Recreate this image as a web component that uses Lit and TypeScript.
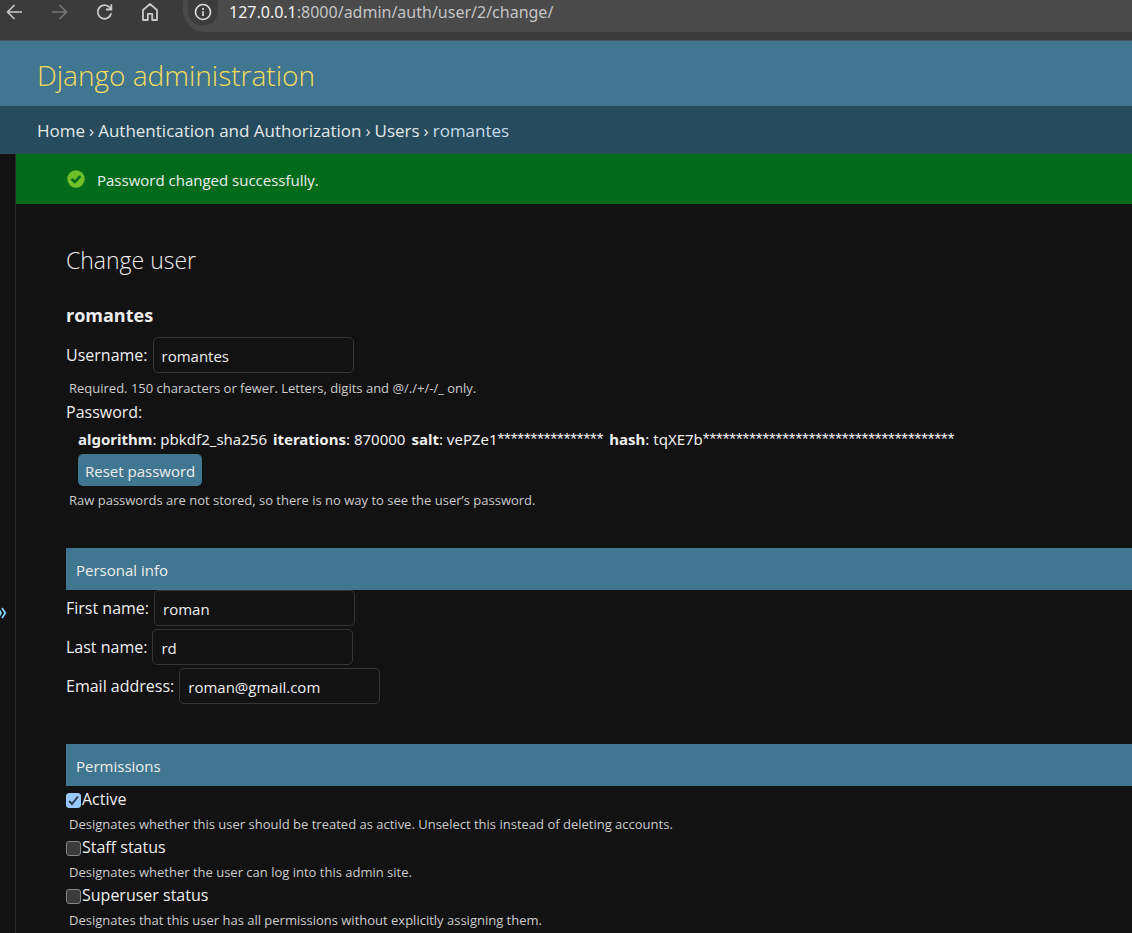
import { LitElement, html, css } from "lit";
import { customElement, property } from "lit/decorators.js";

const base = css`
  * { box-sizing: border-box; margin: 0; padding: 0; }
  a { color: inherit; text-decoration: none; }
  button { border: 0; background: none; color: inherit; font: inherit; cursor: pointer; }
  svg { display: block; }
`;

@customElement("browser-bar")
class BrowserBar extends LitElement {
  static styles = [base, css`
    :host { display: block; background: #3b3b3b; color: #c9c9c9; }
    .bar { display: flex; align-items: flex-start; height: 41px; border-bottom: 1px solid #3f5660; overflow: hidden; }
    .tools { display: flex; flex: none; width: 183px; }
    .tool { width: 45px; height: 23px; display: flex; align-items: center; padding-left: 4px; }
    .tool.off { color: #777; }
    .address { flex: 1; height: 32px; display: flex; gap: 10px; background: #4a4a4a; border-bottom-left-radius: 22px; }
    .info { width: 36px; height: 27px; flex: none; display: flex; justify-content: center; padding: 0 0 4px 4px; }
    .disc { width: 30px; height: 26px; display: flex; justify-content: center; align-items: center; background: #3c3c3c; border-radius: 0 0 15px 15px; color: #e0e0e0; }
    .url { font-family: "Noto Sans", "Open Sans", sans-serif; font-size: 16px; line-height: 24px; color: #c4c4c4; white-space: nowrap; }
    .host { color: #f0f0f0; }
  `];
  render() {
    return html`<div class="bar">
      <div class="tools">
        <button class="tool" aria-label="Back"><svg width="22" height="22" viewBox="0 0 22 22" fill="none" stroke="currentColor" stroke-width="1.6"><path d="M18 11H4M10.500 4L3.500 11l7 7"/></svg></button>
        <button class="tool off" aria-label="Forward"><svg width="22" height="22" viewBox="0 0 22 22" fill="none" stroke="currentColor" stroke-width="1.6"><path d="M3 11h14M10.500 4l7 7-7 7"/></svg></button>
        <button class="tool" aria-label="Reload"><svg width="22" height="22" viewBox="0 0 22 22" fill="none" stroke="currentColor" stroke-width="1.800"><path d="M17.200 12.300A6.800 6.800 0 1 1 15.700 6.500L17 8M17.300 3.200v5.300h-5.300"/></svg></button>
        <button class="tool" aria-label="Home"><svg width="22" height="22" viewBox="0 0 22 22" fill="none" stroke="currentColor" stroke-width="1.800" stroke-linejoin="round"><path d="M4 9l7-6 7 6v10h-4.800v-6.200H8.800V19H4z"/></svg></button>
      </div>
      <div class="address">
        <button class="info" aria-label="Site information"><span class="disc"><svg width="20" height="20" viewBox="0 0 20 20" fill="none" stroke="currentColor" stroke-width="1.600"><circle cx="10" cy="9" r="7.500"/><path d="M10 8.300v4.700M10 5v2"/></svg></span></button>
        <div class="url"><span class="host">127.0.0.1</span>:8000/admin/auth/user/2/change/</div>
      </div>
    </div>`;
  }
}

@customElement("text-field")
class TextField extends LitElement {
  @property() label = "";
  @property() value = "";
  @property() type = "text";
  static styles = [base, css`
    :host { display: block; }
    .row { display: flex; align-items: center; gap: 5px; min-height: 36px; font-size: 16px; }
    label { line-height: 24px; }
    input { width: 201px; height: 36px; padding: 2px 8px 0 8px; border: 1px solid #353535; border-radius: 5px; background: #121212; color: #eee; font-family: inherit; font-size: 15px; }
  `];
  render() {
    return html`<div class="row"><label for="field">${this.label}:</label><input id="field" type=${this.type} .value=${this.value}></div>`;
  }
}

@customElement("check-field")
class CheckField extends LitElement {
  @property() label = "";
  @property() help = "";
  @property({ type: Boolean }) checked = false;
  static styles = [base, css`
    :host { display: block; }
    .row { display: flex; align-items: center; gap: 1px; height: 26px; font-size: 16px; }
    label { line-height: 26px; }
    input { appearance: none; width: 15px; height: 15px; margin-top: 3px; border: 1px solid #858585; border-radius: 3px; background: #3b3b3b; }
    input:checked { border-color: #99c8ff; background: #99c8ff; }
    .box { display: grid; }
    .box > * { grid-area: 1 / 1; }
    .tick { display: none; margin-top: 3px; pointer-events: none; }
    input:checked + .tick { display: block; }
    .help { padding: 2px 0 0 3px; font-size: 13px; line-height: 20px; color: #ccc; }
  `];
  render() {
    return html`<div class="row"><span class="box"><input id="box" type="checkbox" .checked=${this.checked} aria-describedby="help"><svg class="tick" width="15" height="15" viewBox="0 0 15 15" fill="none" stroke="#2c3b4c" stroke-width="2"><path d="M3 8l3 3 6-7.500"/></svg></span><label for="box">${this.label}</label></div>
      <p class="help" id="help">${this.help}</p>`;
  }
}

@customElement("app-root")
class AppRoot extends LitElement {
  static styles = [base, css`
    :host { display: block; height: 100vh; overflow: hidden; background: #121212; color: #eee; font-family: "Open Sans", "Noto Sans", sans-serif; font-size: 16px; }
    .page { display: flex; flex-direction: column; height: 100%; }
    .page > * { flex: none; }
    .header { background: #417690; padding: 0 37px; }
    .brand { font-size: 28px; line-height: 65px; height: 65px; padding-top: 2px; font-weight: 300; color: #f5dd5d; }
    .crumbs { display: flex; gap: 4px; background: #264b5d; color: #e2e8ea; padding: 2px 37px 0; font-size: 17px; line-height: 46px; white-space: nowrap; }
    .current { color: #c4dce8; }
    .body { display: flex; flex: 1 0 0; min-height: 0; }
    .toggle { flex: none; width: 16px; border-right: 1px solid #2b2b2b; overflow: hidden; display: flex; align-items: center; padding-top: 138px; color: #81d4fa; }
    .main { flex: 1; min-width: 0; }
    .message { display: flex; align-items: center; gap: 12px; height: 50px; padding-left: 51px; background: #006b1b; font-size: 15px; line-height: 24px; }
    .message p { padding-top: 2px; }
    .content { padding: 38px 0 0 50px; }
    h1 { font-size: 23px; line-height: 36px; font-weight: 300; }
    h2 { font-size: 18px; line-height: 26px; margin: 24px 0 9px; font-weight: 700; }
    .help { padding-left: 3px; font-size: 13px; line-height: 22px; color: #ccc; }
    .username { margin-bottom: 4px; }
    .caption { line-height: 26px; }
    .password { padding-left: 12px; }
    .summary { display: flex; gap: 6px; font-family: "Noto Sans", "Open Sans", sans-serif; font-size: 15px; line-height: 28px; white-space: nowrap; }
    .mask { font-family: "Liberation Sans", Arial, sans-serif; font-size: 17px; line-height: 1; }
    .reset { display: inline-block; margin: 1px 0 3px; padding: 2px 7px 0; border-radius: 5px; background: #417690; font-size: 15px; line-height: 30px; vertical-align: top; }
    .section { display: flex; flex-direction: column; margin-top: 37px; }
    .section + .section { margin-top: 40px; }
    .names { gap: 3px; }
    .names h3 { margin-bottom: -3px; }
    h3 { background: #417690; padding: 2px 10px 0; font-size: 15px; line-height: 40px; font-weight: 400; }
  `];
  render() {
    return html`<div class="page">
      <browser-bar></browser-bar>
      <header class="header"><div class="brand"><a href="#">Django administration</a></div></header>
      <nav class="crumbs" aria-label="Breadcrumbs"><a href="#">Home</a><span>›</span><a href="#">Authentication and Authorization</a><span>›</span><a href="#">Users</a><span>›</span><span class="current">romantes</span></nav>
      <div class="body">
        <button class="toggle" aria-label="Toggle navigation"><svg width="8" height="14" viewBox="0 0 8 14" fill="none" stroke="currentColor" stroke-width="1.800"><path d="M-2 2l3 5-3 5M2 2l3.300 5L2 12"/></svg></button>
        <main class="main">
          <div class="message" role="status">
            <svg width="18" height="18" viewBox="0 0 18 18"><circle cx="9" cy="9" r="8.700" fill="#70bf2b"/><path d="M4.500 8.800l3.200 3.200 5.800-5.800" fill="none" stroke="#006b1b" stroke-width="2.600"/></svg>
            <p>Password changed successfully.</p>
          </div>
          <form class="content">
            <h1>Change user</h1>
            <h2>romantes</h2>
            <text-field class="username" label="Username" value="romantes"></text-field>
            <p class="help">Required. 150 characters or fewer. Letters, digits and @/./+/-/_ only.</p>
            <p class="caption">Password:</p>
            <div class="password">
              <p class="summary"><span><b>algorithm</b>: pbkdf2_sha256</span> <span><b>iterations</b>: 870000</span> <span><b>salt</b>: vePZe1<span class="mask">${"*".repeat(16)}</span></span> <span><b>hash</b>: tqXE7b<span class="mask">${"*".repeat(38)}</span></span></p>
              <a class="reset" href="#">Reset password</a>
            </div>
            <p class="help">Raw passwords are not stored, so there is no way to see the user’s password.</p>
            <section class="section names">
              <h3>Personal info</h3>
              <text-field label="First name" value="roman"></text-field>
              <text-field label="Last name" value="rd"></text-field>
              <text-field label="Email address" type="email" value="roman@gmail.com"></text-field>
            </section>
            <section class="section">
              <h3>Permissions</h3>
              <check-field checked label="Active" help="Designates whether this user should be treated as active. Unselect this instead of deleting accounts."></check-field>
              <check-field label="Staff status" help="Designates whether the user can log into this admin site."></check-field>
              <check-field label="Superuser status" help="Designates that this user has all permissions without explicitly assigning them."></check-field>
            </section>
          </form>
        </main>
      </div>
    </div>`;
  }
}
